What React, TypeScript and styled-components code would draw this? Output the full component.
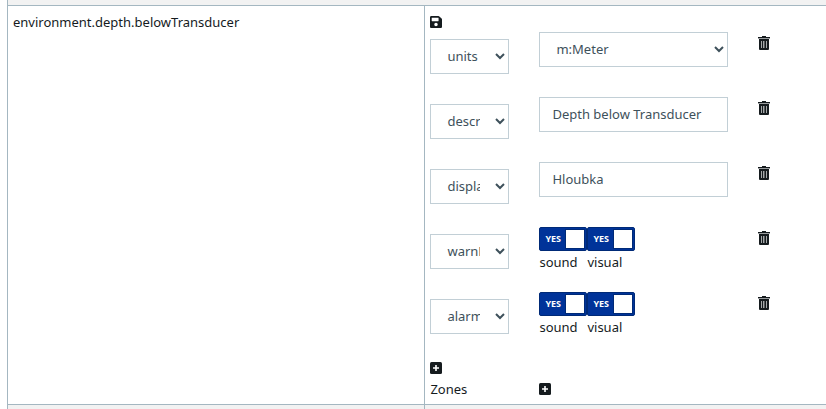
import React from 'react';
import styled, { createGlobalStyle } from 'styled-components';
import { FaSave } from 'react-icons/fa';

const GlobalStyle = createGlobalStyle`
  *, *::before, *::after { box-sizing: border-box; }
  body {
    margin: 0;
    background: #fff;
    color: #151b1e;
    font-family: "Noto Sans", "Open Sans", sans-serif;
    font-size: 13px;
    line-height: 21px;
    overflow: hidden;
  }
`;

const MetaTable = styled.table`
  width: calc(100% - 7px);
  margin-left: 7px;
  border-collapse: collapse;
  table-layout: fixed;
`;

const PathColumn = styled.col`
  width: 51%;
`;

const StripeRow = styled.tr`
  height: 5px;
  background: #f2f2f2;
`;

const StripeCell = styled.td`
  padding: 0;
  border: 1px solid #a4b7c1;
  border-top: 0;
  border-right: 0;
`;

const Cell = styled.td`
  padding: 6px 5px 4px;
  border: 1px solid #a4b7c1;
  border-right: 0;
  vertical-align: top;
`;

const Line = styled.div`
  display: flex;
  align-items: center;
  height: 21px;
`;

const SaveLine = styled(Line)`
  height: 20px;
`;

const AddLine = styled(Line)`
  height: 22px;
`;

const IconButton = styled.button`
  display: flex;
  padding: 0;
  border: 0;
  background: none;
  color: #151b1e;
`;

const SaveIcon = styled(FaSave)`
  width: 12px;
  height: 14px;
`;

const Columns = styled.div`
  display: grid;
  grid-template-columns: 79px 189px auto;
  column-gap: 30px;
  align-items: start;
  justify-content: start;
`;

const EntryRow = styled(Columns)`
  height: 65px;
`;

const Select = styled.select`
  width: 100%;
  height: 35px;
  padding: 5px 12px;
  border: 1px solid #c2cfd6;
  border-radius: 0;
  background: #fff;
  color: #3e515b;
  font: inherit;
`;

const KeySelect = styled(Select)`
  margin-top: 7px;
`;

const TextInput = styled.input`
  width: 100%;
  height: 35px;
  padding: 5px 12px;
  border: 1px solid #c2cfd6;
  border-radius: 0;
  color: #3e515b;
  font: inherit;
`;

const Switches = styled.div`
  display: flex;
`;

const SwitchLabel = styled.label`
  display: flex;
  flex-direction: column;
  gap: 1px;
  width: 48px;
`;

const SwitchInput = styled.input`
  appearance: none;
  display: flex;
  align-items: center;
  justify-content: space-between;
  width: 48px;
  height: 24px;
  margin: 0;
  padding: 0 1px 0 5px;
  border: 1px solid #002a77;
  border-radius: 2px;
  background: #039;
  color: #fff;
  font: 700 9px/20px "Open Sans", "Noto Sans", sans-serif;

  &::before {
    content: "NO";
  }

  &:checked::before {
    content: "YES";
  }

  &::after {
    content: "";
    width: 20px;
    height: 20px;
    border: 1px solid #002a77;
    background: #fff;
  }
`;

const TrashSvg = styled.svg`
  display: block;
  margin-top: 4px;
`;

const Trash = () => (
  <TrashSvg width="12" height="14" viewBox="0 0 12 14" aria-hidden="true">
    <path fill="#151b1e" d="M4 0h4v1h4v1H0V1h4z" />
    <path fill="#9a9d9f" d="M0 2h12v1H0z" />
    <path fill="#151b1e" d="M1 3h10v10q0 1-1 1H2q-1 0-1-1z" />
    <path fill="#a5a8a9" d="M3 5h1v7H3zM5 5h2v7H5zM8 5h1v7H8z" />
    <path fill="#55595b" d="M6 5h1v7H6z" />
  </TrashSvg>
);

const Plus = () => (
  <svg width="12" height="12" viewBox="0 0 12 12" aria-hidden="true">
    <rect width="12" height="12" rx="1.5" fill="#151b1e" />
    <path fill="#fff" d="M5.2 3h1.6v2.2H9v1.6H6.8V9H5.2V6.8H3V5.2h2.2z" />
  </svg>
);

type Entry =
  | { key: string; kind: 'unit'; value: string }
  | { key: string; kind: 'text'; value: string }
  | { key: string; kind: 'method' };

const entries: Entry[] = [
  { key: 'units', kind: 'unit', value: 'm:Meter' },
  { key: 'description', kind: 'text', value: 'Depth below Transducer' },
  { key: 'displayName', kind: 'text', value: 'Hloubka' },
  { key: 'warnMethod', kind: 'method' },
  { key: 'alarmMethod', kind: 'method' },
];

const EntryValue = ({ entry }: { entry: Entry }) => {
  if (entry.kind === 'unit') {
    return (
      <Select aria-label={entry.key} defaultValue={entry.value}>
        <option>{entry.value}</option>
      </Select>
    );
  }
  if (entry.kind === 'text') {
    return <TextInput aria-label={entry.key} type="text" defaultValue={entry.value} />;
  }
  return (
    <Switches>
      {['sound', 'visual'].map((method) => (
        <SwitchLabel key={method}>
          <SwitchInput type="checkbox" defaultChecked />
          {method}
        </SwitchLabel>
      ))}
    </Switches>
  );
};

export default function App() {
  return (
    <>
      <GlobalStyle />
      <MetaTable>
        <colgroup>
          <PathColumn />
          <col />
        </colgroup>
        <tbody>
          <StripeRow>
            <StripeCell colSpan={2} />
          </StripeRow>
          <tr>
            <Cell>environment.depth.belowTransducer</Cell>
            <Cell>
              <SaveLine>
                <IconButton type="button" aria-label="Save">
                  <SaveIcon />
                </IconButton>
              </SaveLine>
              {entries.map((entry) => (
                <EntryRow key={entry.key}>
                  <KeySelect aria-label="Key" defaultValue={entry.key}>
                    {entries.map(({ key }) => (
                      <option key={key}>{key}</option>
                    ))}
                  </KeySelect>
                  <EntryValue entry={entry} />
                  <IconButton type="button" aria-label={`Delete ${entry.key}`}>
                    <Trash />
                  </IconButton>
                </EntryRow>
              ))}
              <AddLine>
                <IconButton type="button" aria-label="Add entry">
                  <Plus />
                </IconButton>
              </AddLine>
              <Columns>
                <span>Zones</span>
                <Line>
                  <IconButton type="button" aria-label="Add zone">
                    <Plus />
                  </IconButton>
                </Line>
              </Columns>
            </Cell>
          </tr>
          <StripeRow>
            <StripeCell />
            <StripeCell />
          </StripeRow>
        </tbody>
      </MetaTable>
    </>
  );
}
